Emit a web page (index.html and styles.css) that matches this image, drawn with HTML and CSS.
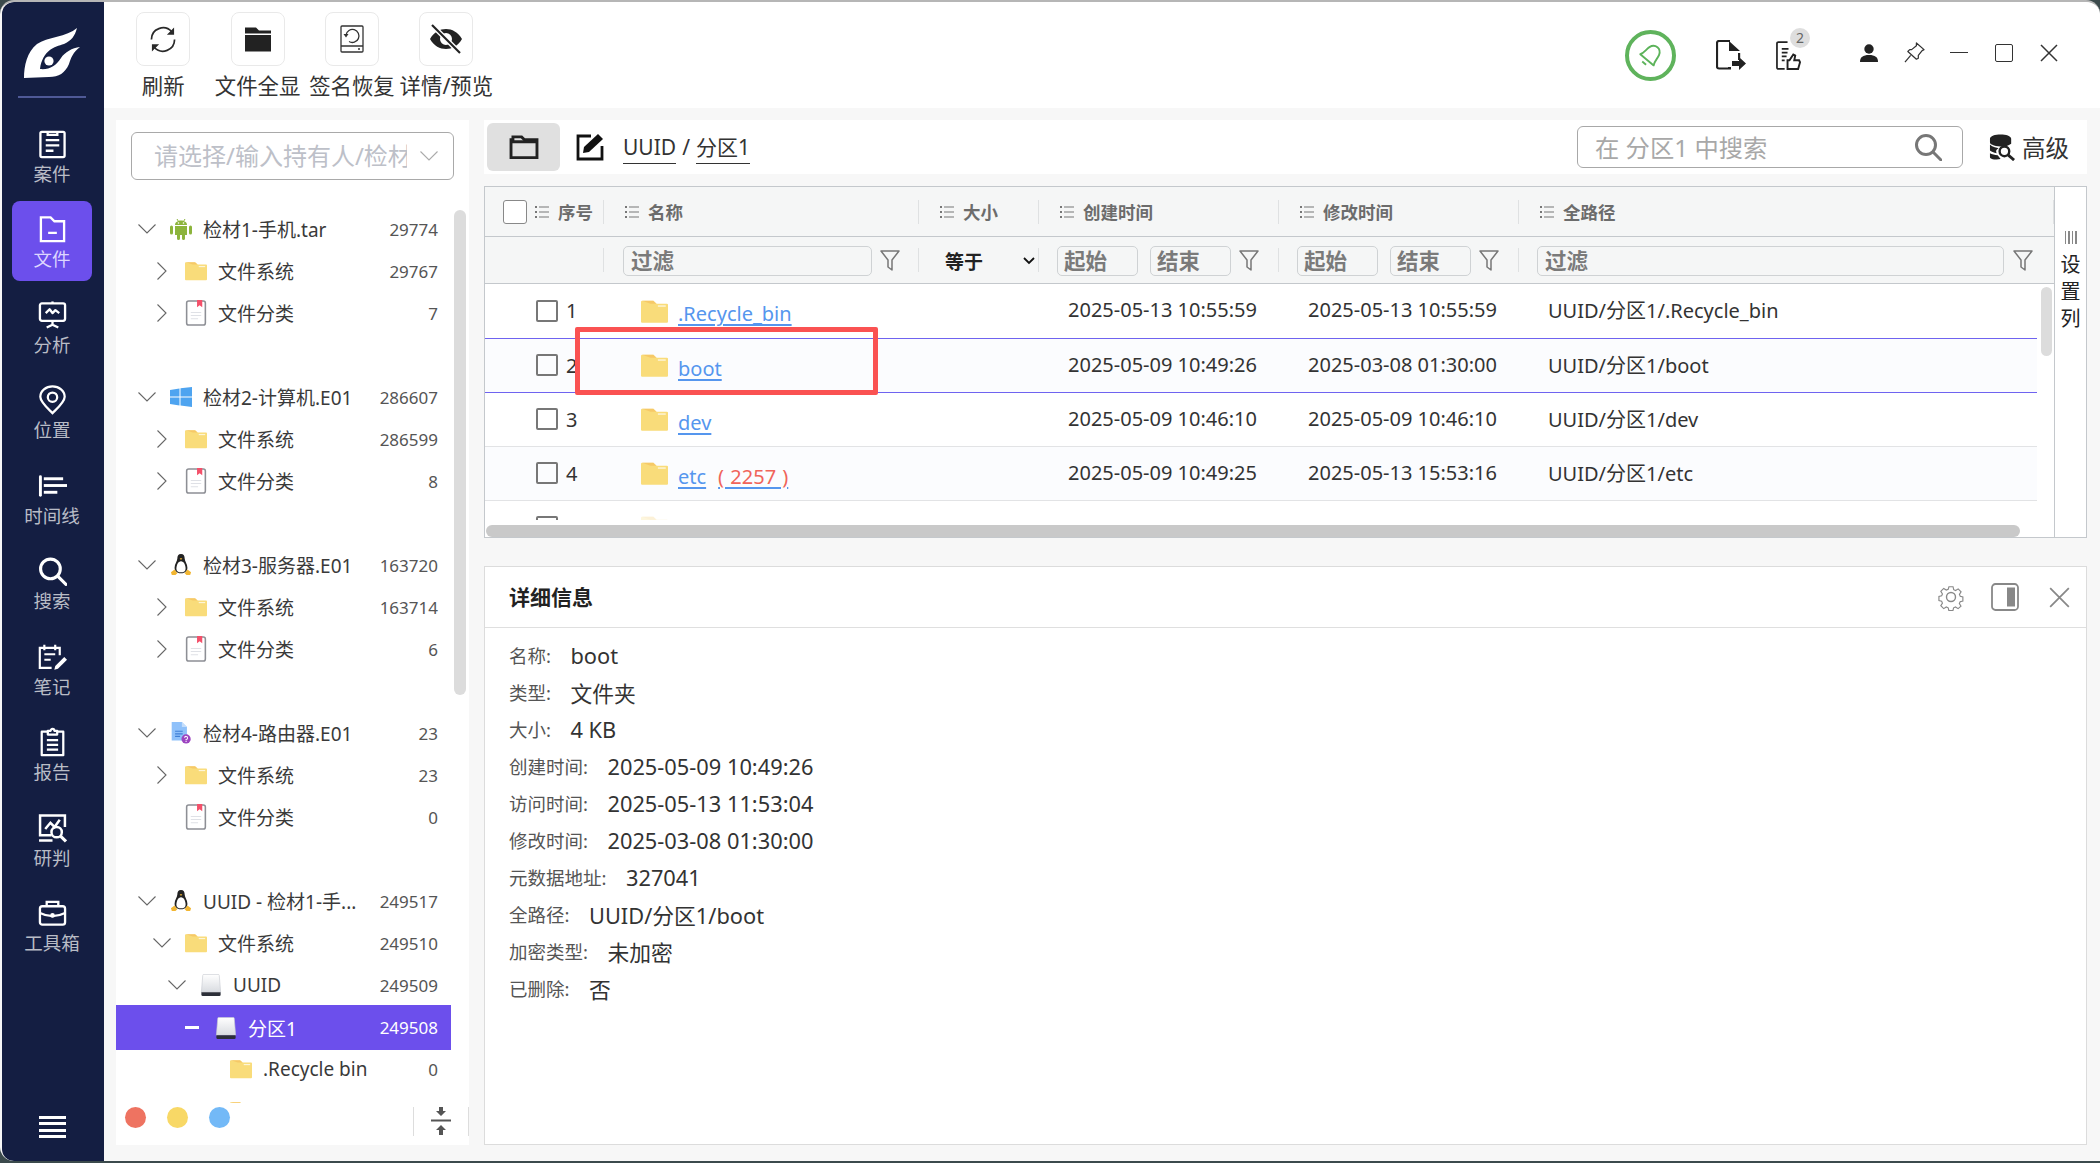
FILE: index.html
```html
<!DOCTYPE html>
<html lang="zh-CN">
<head>
<meta charset="utf-8">
<title>文件</title>
<link rel="stylesheet" href="styles.css">
</head>
<body>
<svg class="defs" xmlns="http://www.w3.org/2000/svg">
  <symbol id="i-logo" viewBox="20 24 66 58"><path fill="#fff" d="M78 28C76 36 72 41 65 44C55 47 44 50 41 69C50 70 57 66 62 58C66 52 73 48 81 47C74 52 72 58 70 64C66 73 60 77 50 77L25 78C25 66 28 52 38 44C48 37 68 37 78 28Z"/><circle cx="50" cy="61" r="4.6" fill="#fff"/></symbol>
  <symbol id="i-case" viewBox="0 0 30 30"><g fill="none" stroke="currentColor" stroke-width="2.4"><rect x="2.5" y="2.5" width="25" height="26" rx="1.5"/><path d="M10 2.5v3h10v-3M8 11h14M8 16.500h14M8 22h8"/></g></symbol>
  <symbol id="i-file" viewBox="0 0 30 30"><g fill="none" stroke="currentColor" stroke-width="2.4"><path d="M3 27.500V3h10l4 4h10v20.500z"/><path d="M10.500 19h9"/></g></symbol>
  <symbol id="i-ana" viewBox="0 0 30 30"><g fill="none" stroke="currentColor" stroke-width="2.4" stroke-linejoin="round"><rect x="2" y="3" width="26" height="18" rx="2"/><path d="M8 13l4-4 3 4 3-3 4 3M15 21v5M9 28l6-3 6 3"/><path d="M15 1v2"/></g></symbol>
  <symbol id="i-loc" viewBox="0 0 30 32"><g fill="none" stroke="currentColor" stroke-width="2.400"><path d="M15 30C9 24 2 18 2 12.500C2 6 8 1.500 15 1.500S28 6 28 12.500C28 18 21 24 15 30Z"/><circle cx="15" cy="13" r="5"/></g></symbol>
  <symbol id="i-time" viewBox="0 0 30 24"><g fill="#fff"><rect x="1" y="1" width="3" height="22" rx="1.500"/><rect x="6" y="3" width="20" height="3"/><rect x="6" y="10" width="24" height="3"/><rect x="6" y="17" width="14" height="3"/></g></symbol>
  <symbol id="i-search" viewBox="0 0 28 28"><g fill="none" stroke="currentColor" stroke-width="3"><circle cx="12" cy="12" r="9.500"/><path d="M19 19l8 8" stroke-linecap="round"/></g></symbol>
  <symbol id="i-note" viewBox="0 0 32 30"><g fill="none" stroke="currentColor" stroke-width="2.400"><path d="M24 13V5H2v22h13M7 1.500v6M19 1.500v6M7 12h12M7 18h7"/></g><path fill="currentColor" d="M19 25l10-10 3 3-10 10-4 1z"/></symbol>
  <symbol id="i-rep" viewBox="0 0 28 32"><g fill="none" stroke="currentColor" stroke-width="2.400" stroke-linejoin="round"><path d="M9 5H2.500v25h23V5H19"/><path d="M9 8V4h3a2 2 0 0 1 4 0h3v4zM8 14h12M8 19h12M8 24h12"/></g></symbol>
  <symbol id="i-judge" viewBox="0 0 28 28"><g fill="none" stroke="currentColor" stroke-width="2.400"><path d="M13 21H2V2h24v11M1 26h13M7 15l5-6 4 4 5-7"/><circle cx="18" cy="18" r="5"/><path d="M22 22l5 5" stroke-width="3"/></g></symbol>
  <symbol id="i-tool" viewBox="0 0 30 28"><g fill="none" stroke="currentColor" stroke-width="2.400"><rect x="2" y="7" width="26" height="19" rx="2.500"/><path d="M9 7V2.500h12V7M2 14c8 4 18 4 26 0"/><circle cx="15" cy="16.500" r="1.200" fill="currentColor"/></g></symbol>
  <symbol id="i-sync" viewBox="0 0 28 28"><g fill="none" stroke="#2a2a2a" stroke-width="1.800"><path d="M2 14a12 12 0 0 1 21-8"/><path d="M26 14a12 12 0 0 1-21 8"/></g><path fill="#2a2a2a" d="M25.500 1.500v7.500h-7.500zM2.500 26.500V19h7.500z"/></symbol>
  <symbol id="i-folder-s" viewBox="0 0 28 26"><path fill="#222" d="M1 1h11l3 3h12v3H1zM1 8.500h26V25H1z"/></symbol>
  <symbol id="i-restore" viewBox="0 0 24 28"><g fill="none" stroke="#333" stroke-width="1.300"><rect x="1" y="1" width="22" height="26" rx="1"/><path d="M1 21h22"/><path d="M6 10a6.500 6.500 0 1 1 3 6.500"/></g><path fill="#333" d="M3.500 9h5l-2.500 3.500z"/><circle cx="19" cy="24" r="1" fill="#333"/></symbol>
  <symbol id="i-eyeoff" viewBox="0 0 34 30"><path fill="#222" fill-rule="evenodd" d="M1 15C5 8 11 5 17 5s12 3 16 10c-4 7-10 10-16 10S5 22 1 15zM17 9a6 6 0 1 0 0 12 6 6 0 0 0 0-12z"/><path d="M3 1l28 28" stroke="#fff" stroke-width="5"/><path d="M3 1l28 28" stroke="#222" stroke-width="2.200"/></symbol>
  <symbol id="i-bell" viewBox="0 0 24 24"><g transform="rotate(40 12 12)" fill="none" stroke="#5cb35a" stroke-width="1.500" stroke-linejoin="round"><path d="M5 17c2-3 1-6 2-9 1-3 3-4 5-4s4 1 5 4c1 3 0 6 2 9z"/><path d="M10 20.500h4"/></g></symbol>
  <symbol id="i-export" viewBox="0 0 30 30"><path fill="none" stroke="#222" stroke-width="2.200" d="M12 28.500H3a2 2 0 0 1-2-2V3a2 2 0 0 1 2-2h11"/><path fill="#222" d="M13 1l11 10h-11zM22 13h2.200v7H22zM16 21h7v-4l7 6.500-7 6.500v-4h-7zM12 27h3v2.500h-3z"/></symbol>
  <symbol id="i-doc-up" viewBox="0 0 26 30"><path fill="none" stroke="#222" stroke-width="1.800" d="M9 29H2.500a1.500 1.500 0 0 1-1.500-1.500V2.500A1.500 1.500 0 0 1 2.500 1H12"/><path stroke="#222" stroke-width="1.800" d="M6 8h7M6 12h6M6 16h5M6 20h3"/><path fill="none" stroke="#222" stroke-width="2" d="M12 29V20h2l4-6 2 1-1 5h5l1 2-2 7h-9z"/></symbol>
  <symbol id="i-user" viewBox="0 0 18 18"><circle cx="9" cy="5" r="4.700" fill="#222"/><path fill="#222" d="M0 18c0-5 3-7 9-7s9 2 9 7z"/></symbol>
  <symbol id="i-pin" viewBox="0 0 22 22"><g fill="none" stroke="#333" stroke-width="1.300" stroke-linejoin="round"><path d="M13 1l8 7-2 1-4 5 0 3-2 1-9-8 2-2 2 0 5-4z"/><path d="M7 14l-6 7"/></g></symbol>
  <symbol id="i-x" viewBox="0 0 18 18"><path stroke="currentColor" stroke-width="1.500" d="M1 1l16 16M17 1L1 17"/></symbol>
  <symbol id="i-adv" viewBox="0 0 28 28"><path fill="#222" d="M1 5c0-6 22-6 22 0v5c-3 2-6 3-9 3-6 0-13-2-13-4zM1 11c3 3 7 3 9 4-3 1-3 3-2 5-3-1-6-2-7-3zM1 20c2 1 5 2 8 2l3 4c-5 1-11 0-11-2z"/><circle cx="16" cy="18" r="5" fill="#fff" stroke="#222" stroke-width="2.500"/><path stroke="#222" stroke-width="3" d="M20 22l6 5"/></symbol>
  <symbol id="i-folder-o" viewBox="0 0 30 26"><path fill="none" stroke="#222" stroke-width="3" d="M1.500 23.500V5h2V2h9l3 3h13v18.500z"/><path stroke="#222" stroke-width="3" d="M2 7h26"/></symbol>
  <symbol id="i-edit" viewBox="0 0 28 28"><path fill="none" stroke="#111" stroke-width="2.800" d="M15 3H2v23h24V13"/><path fill="#111" d="M22 1l5 5-14 13-6 1 1-6zM9 19"/></symbol>
  <symbol id="i-list" viewBox="0 0 14 12"><path fill="#777" d="M0 0h2v2H0zM4 .500h10v1H4zM0 5h2v2H0zM4 5.500h10v1H4zM0 10h2v2H0zM4 10.500h10v1H4z"/></symbol>
  <symbol id="i-funnel" viewBox="0 0 20 22"><path fill="none" stroke="#777" stroke-width="1.500" stroke-linejoin="round" d="M1 1h18l-7 9v10l-4-3v-7z"/></symbol>
  <symbol id="i-chev-d" viewBox="0 0 18 10"><path fill="none" stroke="#666" stroke-width="1.100" d="M.5.500L9 9l8.500-8.500"/></symbol>
  <symbol id="i-chev-k" viewBox="0 0 12 8"><path fill="none" stroke="#111" stroke-width="1.800" d="M1 1l5 5 5-5"/></symbol>
  <symbol id="i-chev-r" viewBox="0 0 18 18"><path fill="none" stroke="#666" stroke-width="1.100" d="M4.500.500L13 9l-8.500 8.500"/></symbol>
  <symbol id="i-folder" viewBox="0 0 24 20"><path fill="#f9dc7a" d="M0 1.500Q0 .5 1 .5H11L14 3H23Q24 3 24 4V19Q24 20 23 20H1Q0 20 0 19z"/><path fill="#f5c060" d="M1 .5h10l2.500 2.500h-5z" opacity=".7"/><rect x="15" y="4.500" width="7" height="1.300" fill="#fff" opacity=".7"/></symbol>
  <symbol id="i-book" viewBox="0 0 20 25"><rect x="1" y="1" width="18" height="23" rx="2" fill="#fff" stroke="#8d8f95" stroke-width="1.500"/><path fill="#f4506a" d="M11 0h5v7l-2.500-2L11 7z"/><path stroke="#dfe1e6" stroke-width="1" d="M5 12h10M5 15h10M5 18h7"/></symbol>
  <symbol id="i-android" viewBox="0 0 22 22"><g fill="#8cb43c"><path d="M5 7c0-6 12-6 12 0z"/><path d="M5 8h12v9H5zM0 9a1.500 1.500 0 0 1 3 0v6a1.500 1.500 0 0 1-3 0zM19 9a1.500 1.500 0 0 1 3 0v6a1.500 1.500 0 0 1-3 0zM7 17h3v3.500a1.500 1.500 0 0 1-3 0zM12 17h3v3.500a1.500 1.500 0 0 1-3 0z"/></g><path stroke="#8cb43c" d="M7 1l1.500 2.500M15 1l-1.500 2.500"/><circle cx="8.500" cy="5" r=".8" fill="#fff"/><circle cx="13.500" cy="5" r=".8" fill="#fff"/></symbol>
  <symbol id="i-win" viewBox="0 0 22 20"><path fill="#4ea4f0" d="M0 3l9.500-1.500V9.500H0zM10.500 1.300L22 0v9.500H10.500zM0 10.500h9.500v8L0 17zM10.500 10.500H22V20l-11.500-1.500z"/></symbol>
  <symbol id="i-tux" viewBox="0 0 22 24"><path fill="#222" d="M11 0c3 0 4 2 4 5 0 3 3 6 3 10 0 3-2 6-7 6s-7-3-7-6c0-4 3-7 3-10 0-3 1-5 4-5z"/><path fill="#fff" d="M11 8c3 0 5 4 5 8 0 3-2 4-5 4s-5-1-5-4c0-4 2-8 5-8z"/><path fill="#f2b632" d="M9.500 4.500h3L11 6.500zM0 20l4-3 3 4-2 2-4 0zM22 20l-4-3-3 4 2 2 4 0z"/></symbol>
  <symbol id="i-qdoc" viewBox="0 0 24 26"><path fill="#8fc1fa" d="M1 0h12l6 6v16H1z"/><path fill="#c4defc" d="M13 0l6 6h-6z"/><path stroke="#3f7fd6" stroke-width="1.300" d="M5 11h9M5 14h9M5 17h6"/><circle cx="18" cy="20" r="5.500" fill="#9c44c0"/><path fill="none" stroke="#fff" stroke-width="1.200" d="M16.200 18.600a1.800 1.800 0 1 1 1.800 2v1"/><circle cx="18" cy="23" r=".7" fill="#fff"/></symbol>
  <symbol id="i-disk" viewBox="0 0 22 24"><defs><linearGradient id="dg" x1="0" y1="0" x2="0" y2="1"><stop offset="0" stop-color="#fff"/><stop offset="1" stop-color="#d8dbe0"/></linearGradient></defs><path fill="url(#dg)" stroke="#c9ccd2" stroke-width=".7" d="M2 1.500Q2 .5 3 .5h16Q20 .5 20 1.500L21.500 20h-21z"/><path fill="#2c2f38" d="M.5 20h21v2.500Q21.500 24 20 24H2Q.5 24 .5 22.500z"/></symbol>
  <symbol id="i-fold" viewBox="0 0 20 28"><g fill="#555"><path d="M10 9L5 4h3V0h4v4h3z"/><rect y="12.500" width="20" height="2"/><path d="M10 18l5 5h-3v5H8v-5H5z"/></g></symbol>
  <symbol id="i-gear" viewBox="0 0 28 28"><g fill="none" stroke="#888" stroke-width="1.400"><path d="M11.500 1.500h5l.8 3.600 2.300 1 3.200-2 3.500 3.500-2 3.200 1 2.300 3.200.8v5l-3.300.8-1 2.300 2 3.200-3.500 3-3.200-2-2.300 1-.8 3.300h-5l-.8-3.300-2.300-1-3.200 2-3.500-3.500 2-3.200-1-2.300-3.300-.8v-5l3.300-.8 1-2.300-2-3.200 3.500-3.500 3.200 2 2.300-1z" transform="translate(2.500 2.500) scale(.82)"/><circle cx="14" cy="14" r="4.500"/></g></symbol>
  <symbol id="i-side" viewBox="0 0 28 28"><rect x="1" y="1" width="26" height="26" rx="3.500" fill="none" stroke="#888" stroke-width="1.800"/><rect x="16" y="4.500" width="8" height="19" fill="#888"/></symbol>
</svg>

<div class="window">
  <nav class="side">
    <div class="logo"><svg class="logo-ic"><use href="#i-logo"/></svg></div>
    <div class="nav">
      <a class="nav-i"><svg class="n-ic"><use href="#i-case"/></svg><span>案件</span></a>
      <a class="nav-i on"><svg class="n-ic"><use href="#i-file"/></svg><span>文件</span></a>
      <a class="nav-i"><svg class="n-ic"><use href="#i-ana"/></svg><span>分析</span></a>
      <a class="nav-i"><svg class="n-ic"><use href="#i-loc"/></svg><span>位置</span></a>
      <a class="nav-i"><svg class="n-ic"><use href="#i-time"/></svg><span>时间线</span></a>
      <a class="nav-i"><svg class="n-ic"><use href="#i-search"/></svg><span>搜索</span></a>
      <a class="nav-i"><svg class="n-ic"><use href="#i-note"/></svg><span>笔记</span></a>
      <a class="nav-i"><svg class="n-ic"><use href="#i-rep"/></svg><span>报告</span></a>
      <a class="nav-i"><svg class="n-ic"><use href="#i-judge"/></svg><span>研判</span></a>
      <a class="nav-i"><svg class="n-ic"><use href="#i-tool"/></svg><span>工具箱</span></a>
    </div>
    <div class="burger"><i></i><i></i><i></i><i></i></div>
  </nav>

  <div class="main">
    <header class="top">
      <div class="tool"><div class="tbox"><svg class="t-ic"><use href="#i-sync"/></svg></div><span>刷新</span></div>
      <div class="tool"><div class="tbox"><svg class="t-ic"><use href="#i-folder-s"/></svg></div><span>文件全显</span></div>
      <div class="tool"><div class="tbox"><svg class="t-ic t-narrow"><use href="#i-restore"/></svg></div><span>签名恢复</span></div>
      <div class="tool"><div class="tbox"><svg class="t-ic t-wide"><use href="#i-eyeoff"/></svg></div><span>详情/预览</span></div>
      <div class="ctl">
        <div class="bell"><svg class="bell-ic"><use href="#i-bell"/></svg></div>
        <svg class="c-export"><use href="#i-export"/></svg>
        <div class="c-doc"><svg class="c-doc-ic"><use href="#i-doc-up"/></svg><b class="badge">2</b></div>
        <svg class="c-user"><use href="#i-user"/></svg>
        <svg class="c-pin"><use href="#i-pin"/></svg>
        <i class="c-min"></i>
        <i class="c-max"></i>
        <svg class="c-close"><use href="#i-x"/></svg>
      </div>
    </header>

    <div class="content">
      <aside class="left">
        <div class="sel"><span class="sel-t">请选择/输入持有人/检材</span><svg class="sel-c"><use href="#i-chev-d"/></svg></div>
        <div class="tree">
          <div class="scroll-y"></div>
          <div class="grp">
            <div class="r l0"><svg class="car"><use href="#i-chev-d"/></svg><svg class="ti"><use href="#i-android"/></svg><span class="tn">检材1-手机.tar</span><span class="tc">29774</span></div>
            <div class="r l1"><svg class="car cr"><use href="#i-chev-r"/></svg><svg class="ti"><use href="#i-folder"/></svg><span class="tn">文件系统</span><span class="tc">29767</span></div>
            <div class="r l1"><svg class="car cr"><use href="#i-chev-r"/></svg><svg class="ti ti-b"><use href="#i-book"/></svg><span class="tn">文件分类</span><span class="tc">7</span></div>
          </div>
          <div class="grp">
            <div class="r l0"><svg class="car"><use href="#i-chev-d"/></svg><svg class="ti"><use href="#i-win"/></svg><span class="tn">检材2-计算机.E01</span><span class="tc">286607</span></div>
            <div class="r l1"><svg class="car cr"><use href="#i-chev-r"/></svg><svg class="ti"><use href="#i-folder"/></svg><span class="tn">文件系统</span><span class="tc">286599</span></div>
            <div class="r l1"><svg class="car cr"><use href="#i-chev-r"/></svg><svg class="ti ti-b"><use href="#i-book"/></svg><span class="tn">文件分类</span><span class="tc">8</span></div>
          </div>
          <div class="grp">
            <div class="r l0"><svg class="car"><use href="#i-chev-d"/></svg><svg class="ti"><use href="#i-tux"/></svg><span class="tn">检材3-服务器.E01</span><span class="tc">163720</span></div>
            <div class="r l1"><svg class="car cr"><use href="#i-chev-r"/></svg><svg class="ti"><use href="#i-folder"/></svg><span class="tn">文件系统</span><span class="tc">163714</span></div>
            <div class="r l1"><svg class="car cr"><use href="#i-chev-r"/></svg><svg class="ti ti-b"><use href="#i-book"/></svg><span class="tn">文件分类</span><span class="tc">6</span></div>
          </div>
          <div class="grp">
            <div class="r l0"><svg class="car"><use href="#i-chev-d"/></svg><svg class="ti"><use href="#i-qdoc"/></svg><span class="tn">检材4-路由器.E01</span><span class="tc">23</span></div>
            <div class="r l1"><svg class="car cr"><use href="#i-chev-r"/></svg><svg class="ti"><use href="#i-folder"/></svg><span class="tn">文件系统</span><span class="tc">23</span></div>
            <div class="r l1"><span class="car"></span><svg class="ti ti-b"><use href="#i-book"/></svg><span class="tn">文件分类</span><span class="tc">0</span></div>
          </div>
          <div class="grp">
            <div class="r l0"><svg class="car"><use href="#i-chev-d"/></svg><svg class="ti"><use href="#i-tux"/></svg><span class="tn">UUID - 检材1-手...</span><span class="tc">249517</span></div>
            <div class="r l1"><svg class="car"><use href="#i-chev-d"/></svg><svg class="ti"><use href="#i-folder"/></svg><span class="tn">文件系统</span><span class="tc">249510</span></div>
            <div class="r l2"><svg class="car"><use href="#i-chev-d"/></svg><svg class="ti"><use href="#i-disk"/></svg><span class="tn">UUID</span><span class="tc">249509</span></div>
            <div class="r l3 act"><span class="car dash"></span><svg class="ti"><use href="#i-disk"/></svg><span class="tn">分区1</span><span class="tc">249508</span></div>
            <div class="r l4"><span class="car"></span><svg class="ti"><use href="#i-folder"/></svg><span class="tn">.Recycle bin</span><span class="tc">0</span></div>
            <div class="r l4"><span class="car"></span><svg class="ti"><use href="#i-folder"/></svg></div>
          </div>
        </div>
        <div class="foot">
          <i class="dot d1"></i><i class="dot d2"></i><i class="dot d3"></i>
          <div class="fold"><svg class="fold-ic"><use href="#i-fold"/></svg></div>
        </div>
      </aside>

      <section class="right">
        <div class="bar">
          <div class="fbtn"><svg class="fbtn-ic"><use href="#i-folder-o"/></svg></div>
          <svg class="edit"><use href="#i-edit"/></svg>
          <div class="crumb"><u>UUID</u><span class="sl">/</span><u>分区1</u></div>
          <div class="find"><span>在 分区1 中搜索</span><svg class="find-ic"><use href="#i-search"/></svg></div>
          <svg class="adv-ic"><use href="#i-adv"/></svg><span class="adv">高级</span>
        </div>

        <div class="table">
          <div class="tmain">
            <div class="cols thead">
              <div class="hc hc-seq"><i class="cb-h"></i><svg class="li"><use href="#i-list"/></svg>序号</div>
              <div class="hc"><svg class="li"><use href="#i-list"/></svg>名称</div>
              <div class="hc"><svg class="li"><use href="#i-list"/></svg>大小</div>
              <div class="hc"><svg class="li"><use href="#i-list"/></svg>创建时间</div>
              <div class="hc"><svg class="li"><use href="#i-list"/></svg>修改时间</div>
              <div class="hc"><svg class="li"><use href="#i-list"/></svg>全路径</div>
            </div>
            <div class="cols tfilter">
              <div class="fc"></div>
              <div class="fc"><span class="inp grow">过滤</span><svg class="fn"><use href="#i-funnel"/></svg></div>
              <div class="fc fc-eq"><b>等于</b><svg class="eq-c"><use href="#i-chev-k"/></svg></div>
              <div class="fc fc-d"><span class="inp dt">起始</span><span class="inp dt">结束</span><svg class="fn"><use href="#i-funnel"/></svg></div>
              <div class="fc fc-d"><span class="inp dt">起始</span><span class="inp dt">结束</span><svg class="fn"><use href="#i-funnel"/></svg></div>
              <div class="fc fc-p"><span class="inp grow">过滤</span><svg class="fn"><use href="#i-funnel"/></svg></div>
            </div>
            <div class="tbody">
              <div class="cols tr sel-b">
                <div class="c-seq"><i class="cb"></i>1</div>
                <div class="c-name"><svg class="rf"><use href="#i-folder"/></svg><a class="lnk">.Recycle_bin</a></div>
                <div></div>
                <div class="c-t">2025-05-13 10:55:59</div>
                <div class="c-t">2025-05-13 10:55:59</div>
                <div class="c-t">UUID/分区1/.Recycle_bin</div>
              </div>
              <div class="cols tr alt sel-b">
                <div class="c-seq"><i class="cb"></i>2</div>
                <div class="c-name"><svg class="rf"><use href="#i-folder"/></svg><a class="lnk">boot</a></div>
                <div></div>
                <div class="c-t">2025-05-09 10:49:26</div>
                <div class="c-t">2025-03-08 01:30:00</div>
                <div class="c-t">UUID/分区1/boot</div>
              </div>
              <div class="cols tr">
                <div class="c-seq"><i class="cb"></i>3</div>
                <div class="c-name"><svg class="rf"><use href="#i-folder"/></svg><a class="lnk">dev</a></div>
                <div></div>
                <div class="c-t">2025-05-09 10:46:10</div>
                <div class="c-t">2025-05-09 10:46:10</div>
                <div class="c-t">UUID/分区1/dev</div>
              </div>
              <div class="cols tr alt">
                <div class="c-seq"><i class="cb"></i>4</div>
                <div class="c-name"><svg class="rf"><use href="#i-folder"/></svg><a class="lnk">etc</a><a class="lnk red">( 2257 )</a></div>
                <div></div>
                <div class="c-t">2025-05-09 10:49:25</div>
                <div class="c-t">2025-05-13 15:53:16</div>
                <div class="c-t">UUID/分区1/etc</div>
              </div>
              <div class="cols tr">
                <div class="c-seq"><i class="cb"></i></div>
                <div class="c-name"><svg class="rf rf-faint"><use href="#i-folder"/></svg></div>
              </div>
            </div>
            <div class="hbar"></div>
            <div class="vbar"></div>
          </div>
          <div class="setcol"><div class="bars"><i></i><i></i><i></i><i></i></div><span>设</span><span>置</span><span>列</span></div>
        </div>

        <div class="detail">
          <div class="d-head"><b>详细信息</b><svg class="d-gear"><use href="#i-gear"/></svg><svg class="d-side"><use href="#i-side"/></svg><svg class="d-x"><use href="#i-x"/></svg></div>
          <div class="d-body">
            <div class="d-r"><span>名称:</span>boot</div>
            <div class="d-r"><span>类型:</span>文件夹</div>
            <div class="d-r"><span>大小:</span>4 KB</div>
            <div class="d-r"><span>创建时间:</span>2025-05-09 10:49:26</div>
            <div class="d-r"><span>访问时间:</span>2025-05-13 11:53:04</div>
            <div class="d-r"><span>修改时间:</span>2025-03-08 01:30:00</div>
            <div class="d-r"><span>元数据地址:</span>327041</div>
            <div class="d-r"><span>全路径:</span>UUID/分区1/boot</div>
            <div class="d-r"><span>加密类型:</span>未加密</div>
            <div class="d-r"><span>已删除:</span>否</div>
          </div>
        </div>
      </section>
    </div>
  </div>
  <div class="mark"></div>
</div>
</body>
</html>
```

FILE: styles.css
```css
* { box-sizing: border-box; }
html, body { margin: 0; height: 100%; overflow: hidden; }
body { background: #3b4a4c; font-family: "Noto Sans", "Noto Sans CJK SC", sans-serif; color: #333; }
.defs { width: 0; height: 0; display: block; overflow: hidden; }
svg { display: block; flex: none; }
i { font-style: normal; display: block; }

.window { position: relative; display: flex; width: 2100px; height: 1161px; border-top: 2px solid #b6b6b6; border-radius: 14px 14px 0 14px; background: #f7f7f7; overflow: hidden; padding-left: 2px; }

/* sidebar */
.side { width: 102px; flex: none; background: #141e42; border-radius: 12px 0 0 12px; display: flex; flex-direction: column; align-items: center; padding-right: 2px; }
.logo { width: 68px; height: 96px; border-bottom: 2px solid #4f5996; padding-top: 22px; display: flex; justify-content: center; }
.logo-ic { width: 66px; height: 58px; }
.nav { display: flex; flex-direction: column; gap: 5.450px; margin-top: 18px; }
.nav-i { width: 80px; height: 80px; border-radius: 8px; display: flex; flex-direction: column; align-items: center; color: #fff; padding-top: 13px; }
.nav-i span { font-size: 18.500px; line-height: 24px; color: #b9bcc6; margin-top: 3px; white-space: nowrap; }
.nav-i.on { background: #6c4fec; }
.nav-i.on span { color: #ddd6ff; }
.n-ic { width: 29px; height: 30px; }
.burger { margin-top: auto; margin-bottom: 23px; width: 27px; display: flex; flex-direction: column; gap: 3.300px; }
.burger i { height: 3px; background: #fff; }

.main { flex: 1; min-width: 0; display: flex; flex-direction: column; }

/* top toolbar */
.top { height: 106px; flex: none; background: #fff; display: flex; padding: 10px 42px 0 12px; border-top-right-radius: 14px; }
.tool { width: 94.400px; display: flex; flex-direction: column; align-items: center; }
.tbox { width: 54px; height: 54px; border: 1px solid #e9e9e9; border-radius: 8px; display: flex; align-items: center; justify-content: center; }
.tool span { font-size: 21.400px; line-height: 28px; margin-top: 6px; white-space: nowrap; color: #333; }
.t-ic { width: 28px; height: 27px; }
.t-narrow { width: 24px; height: 28px; }
.t-wide { width: 34px; height: 30px; }

.ctl { margin-left: auto; display: flex; align-items: center; height: 84px; }
.bell { width: 51px; height: 51px; border: 4px solid #5fb35c; border-radius: 50%; display: flex; align-items: center; justify-content: center; margin-top: 2px; }
.bell-ic { width: 30px; height: 30px; }
.c-export { width: 30px; height: 30px; margin-left: 40px; margin-top: 1px; }
.c-doc { position: relative; margin-left: 30px; width: 25px; }
.c-doc-ic { width: 25px; height: 29px; margin-top: 3px; }
.badge { position: absolute; left: 14px; top: -10px; width: 20px; height: 20px; border-radius: 50%; background: #dedede; color: #666; font-weight: 400; font-size: 14px; line-height: 20px; text-align: center; }
.c-user { width: 18px; height: 18px; margin-left: 59px; margin-bottom: 3px; }
.c-pin { width: 21px; height: 21px; margin-left: 26px; margin-bottom: 3px; }
.c-min { width: 18px; height: 1.500px; background: #333; margin-left: 25px; margin-bottom: 3px; }
.c-max { width: 18px; height: 18px; border: 1.300px solid #333; border-radius: 2px; margin-left: 27px; margin-bottom: 3px; }
.c-close { width: 18px; height: 18px; margin-left: 27px; color: #333; margin-bottom: 3px; }

/* content */
.content { flex: 1; min-height: 0; display: flex; gap: 15px; padding: 12px 13px 16px 12px; }
.left { width: 353px; flex: none; background: #fff; display: flex; flex-direction: column; }
.sel { margin: 12px 15px 0; height: 48px; border: 1px solid #a9a9a9; border-radius: 6px; display: flex; align-items: center; padding: 0 15px 0 22px; flex: none; }
.sel-t { font-size: 24px; color: #bdc0c8; width: 253px; overflow: hidden; white-space: nowrap; margin-bottom: 3px; }
.sel-c { width: 18px; height: 10px; margin-left: 13px; opacity: .55; }

.tree { flex: 1; min-height: 0; overflow: hidden; padding-top: 28px; position: relative; }
.scroll-y { position: absolute; right: 3px; top: 30px; width: 12px; height: 485px; border-radius: 6px; background: #dcdcdc; }
.grp { margin-bottom: 42px; }
.r { display: flex; align-items: center; height: 42px; padding-right: 31px; }
.l0 { padding-left: 22px; }
.l1 { padding-left: 37px; }
.l2 { padding-left: 52px; }
.l3 { padding-left: 67px; }
.l4 { padding-left: 82px; }
.car { width: 18px; height: 10px; margin-right: 14px; }
.cr { height: 18px; }
.ti { width: 22px; height: 22px; margin-right: 11px; }
.ti-b { height: 26px; }
.tn { font-size: 19px; color: #3a3a3a; white-space: nowrap; }
.tc { margin-left: auto; font-size: 17px; color: #555; }
.act { background: #6c4fec; height: 45px; margin: -1px 18px -2px 0; padding-right: 13px; }
.act .tn, .act .tc { color: #fff; }
.dash { height: 3px; width: 14px; margin-left: 2px; margin-right: 16px; background: #fff; }

.foot { height: 42px; flex: none; background: #fff; display: flex; align-items: flex-start; padding: 4px 0 0 9px; gap: 21px; position: relative; }
.dot { width: 21px; height: 21px; border-radius: 50%; }
.d1 { background: #ee7361; }
.d2 { background: #f8d866; }
.d3 { background: #73b9f7; }
.fold { margin-left: auto; width: 56px; height: 29px; border-left: 1px solid #ddd; border-right: 1px solid #ddd; display: flex; justify-content: center; }
.fold-ic { width: 20px; height: 28px; }

/* right */
.right { flex: 1; min-width: 0; display: flex; flex-direction: column; }
.bar { height: 54px; flex: none; background: #fff; display: flex; align-items: center; padding-left: 3px; }
.fbtn { width: 73px; height: 48px; background: #e0e0e0; border-radius: 6px; display: flex; align-items: center; justify-content: center; }
.fbtn-ic { width: 30px; height: 25px; }
.edit { width: 28px; height: 28px; margin-left: 16px; }
.crumb { margin-left: 19px; display: flex; align-items: baseline; font-size: 21px; color: #333; margin-top: 2px; }
.crumb u { text-decoration: none; border-bottom: 1px solid #333; line-height: 30px; padding-bottom: 1px; }
.sl { margin: 0 6px; }
.find { margin-left: auto; width: 386px; height: 42px; border: 1px solid #a8a8a8; border-radius: 6px; display: flex; align-items: center; padding: 0 20px 0 17px; font-size: 24.300px; color: #a8a8a8; justify-content: space-between; }
.find span { margin-top: -2px; }
.find-ic { width: 28px; height: 28px; color: #777; }
.adv-ic { width: 27px; height: 27px; margin-left: 26px; }
.adv { font-size: 23.500px; color: #333; margin-left: 6px; margin-right: 18px; }

.table { height: 352px; flex: none; margin-top: 12px; border: 1px solid #c4c8cc; display: flex; background: #fff; }
.tmain { flex: 1; min-width: 0; position: relative; }
.cols { display: grid; grid-template-columns: 119px 315px 120px 240px 240px 1fr; }
.thead { height: 50px; background: #f5f6f6; border-bottom: 1px solid #c4c8cc; }
.hc { display: flex; align-items: center; padding-left: 21px; font-size: 17.500px; font-weight: 700; color: #6c6c6c; background: linear-gradient(#dfe1e2, #dfe1e2) right center / 1px 24px no-repeat; }
.hc-seq { padding-left: 18px; }
.cb-h { width: 24px; height: 24px; border: 1px solid #888; border-radius: 3px; background: #fff; margin-right: 8px; }
.li { width: 14px; height: 12px; margin-right: 9px; }
.tfilter { height: 47px; background: #f5f6f6; border-bottom: 1px solid #c4c8cc; }
.fc { display: flex; align-items: center; padding-left: 19px; padding-top: 2px; background: linear-gradient(#dfe1e2, #dfe1e2) right center / 1px 24px no-repeat; }
.inp { height: 30px; border: 1px solid #cfd2d4; border-radius: 5px; font-size: 21.500px; line-height: 27px; font-weight: 700; color: #7a7a7a; padding-left: 7px; overflow: hidden; }
.grow { flex: 1; }
.fn { width: 20px; height: 22px; margin: 0 19px 0 8px; }
.fc-eq { padding-left: 26px; font-size: 19px; color: #222; justify-content: space-between; padding-right: 4px; }
.eq-c { width: 12px; height: 8px; }
.fc-d { padding-left: 18px; }
.dt { width: 81px; margin-right: 12px; padding-left: 6px; }
.fc-d .fn { margin: 0 0 0 -4px; }
.fc-p { background: none; padding-left: 18px; }
.fc-p .fn { margin: 0 21px 0 9px; }

.tbody { height: 236px; overflow: hidden; width: 1552px; }
.tr { height: 54px; border-bottom: 1px solid #e2e3e5; align-items: center; font-size: 20px; color: #333; }
.tr:first-child { height: 55px; }
.alt { background: #fbfcfe; }
.sel-b { border-bottom-color: #6f63f0; }
.c-seq { display: flex; align-items: center; padding-left: 51px; margin-top: -1px; }
.cb { width: 22px; height: 22px; border: 2px solid #777; border-radius: 2px; margin-right: 8px; }
.c-name { display: flex; align-items: center; padding-left: 37px; }
.rf { width: 27px; height: 23px; margin-right: 10px; }
.lnk { color: #5596ee; text-decoration: underline; text-underline-offset: 3px; margin-top: 5px; }
.red { color: #f0645a; margin-left: 12px; text-decoration-color: #5596ee; word-spacing: 1px; }
.c-t { padding-left: 29px; margin-top: -3px; white-space: nowrap; }
.hbar { position: absolute; left: 1px; top: 338px; width: 1534px; height: 12px; border-radius: 6px; background: #c9c9c9; }
.vbar { position: absolute; left: 1556px; top: 100px; width: 11px; height: 69px; border-radius: 6px; background: #dcdcdc; }

.setcol { width: 32px; flex: none; border-left: 1px solid #c4c8cc; display: flex; flex-direction: column; align-items: center; padding-top: 44px; font-size: 20px; line-height: 27px; color: #222; }
.bars { display: flex; gap: 2px; height: 13px; margin-bottom: 7px; }
.bars i { width: 1.500px; background: #888; }

.detail { flex: 1; min-height: 0; margin-top: 28px; background: #fff; border: 1px solid #dcdcdc; }
.d-head { height: 61px; border-bottom: 1px solid #dfdfdf; display: flex; align-items: center; padding: 0 16px 2px 24px; }
.d-head b { font-size: 21px; color: #222; margin-right: auto; }
.d-gear { width: 28px; height: 28px; margin-top: 2px; }
.d-side { width: 28px; height: 28px; margin-left: 26px; margin-top: 2px; }
.d-x { width: 21px; height: 21px; margin-left: 30px; color: #888; margin-top: 2px; }
.d-body { padding: 8.500px 0 0 24px; }
.d-r { height: 37px; display: flex; align-items: center; font-size: 21.800px; color: #333; white-space: nowrap; }
.d-r span { font-size: 18.500px; color: #555; margin-right: 19.500px; }

.mark { position: absolute; left: 575px; top: 325px; width: 303px; height: 68px; border: 5px solid #fa5252; border-radius: 2px; }
.rf-faint { opacity: .25; }
```
